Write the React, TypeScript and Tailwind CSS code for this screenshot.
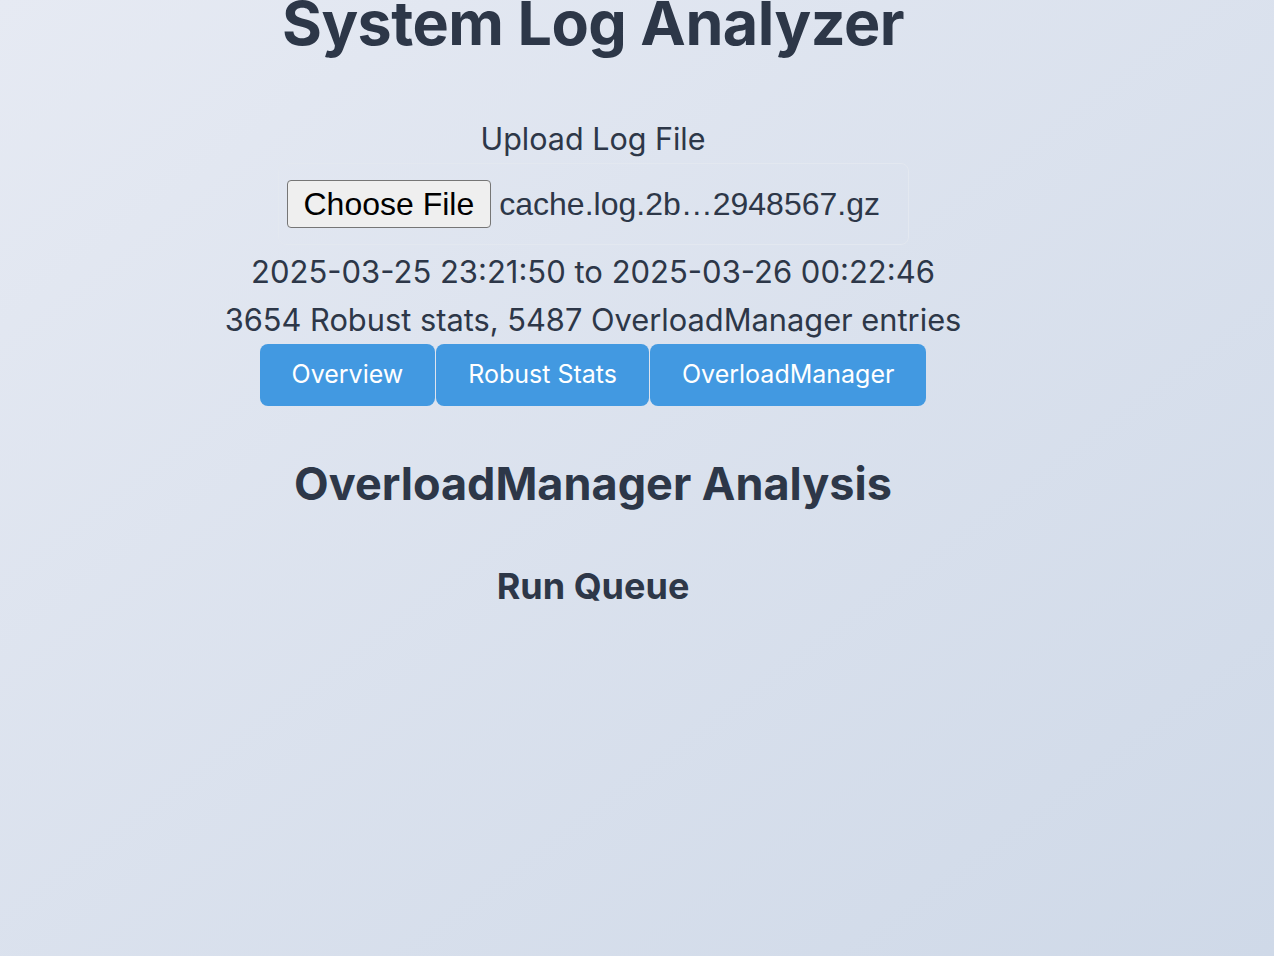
import React from "react";

export default function App() {
  return (
    <div className="min-h-screen w-full bg-linear-to-br from-[#e6eaf3] to-[#cfd9e8] text-[#2d3748] overflow-hidden" style={{ fontFamily: "Inter, 'Noto Sans', sans-serif" }}>
      <div className="w-[1186px] flex flex-col items-center">
        <h1 className="text-[61px] font-bold leading-none mt-[-7px] tracking-[-0.5px]">System Log Analyzer</h1>
        <div className="mt-[70px] text-[30.5px] leading-none">Upload Log File</div>
        <div className="mt-[8px] w-[631px] h-[82px] rounded-[8px] border border-[#e3e8f0] flex items-center pl-[8px]">
          <button className="h-[48px] px-[16px] bg-[#efefef] border border-[#767676] rounded-[4px] text-black text-[32px] leading-none" style={{ fontFamily: "'Liberation Sans', Arial, sans-serif" }}>Choose File</button>
          <span className="ml-[8px] text-[32px] leading-none" style={{ fontFamily: "'Liberation Sans', Arial, sans-serif" }}>cache.log.2b…2948567.gz</span>
        </div>
        <div className="mt-[3px] text-[31px] leading-[48px]">2025-03-25 23:21:50 to 2025-03-26 00:22:46</div>
        <div className="text-[30.8px] leading-[48px]">3654 Robust stats, 5487 OverloadManager entries</div>
        <div className="flex gap-[1px] mt-[0px]">
          <button className="h-[62px] px-[32px] bg-[#4299e1] text-white text-[25px] rounded-[8px]">Overview</button>
          <button className="h-[62px] px-[32px] bg-[#4299e1] text-white text-[25px] rounded-[8px]">Robust Stats</button>
          <button className="h-[62px] px-[32px] bg-[#4299e1] text-white text-[25px] rounded-[8px]">OverloadManager</button>
        </div>
        <h2 className="mt-[55px] text-[45px] font-bold leading-none">OverloadManager Analysis</h2>
        <h3 className="mt-[62px] text-[36px] font-bold leading-none">Run Queue</h3>
      </div>
    </div>
  );
}
